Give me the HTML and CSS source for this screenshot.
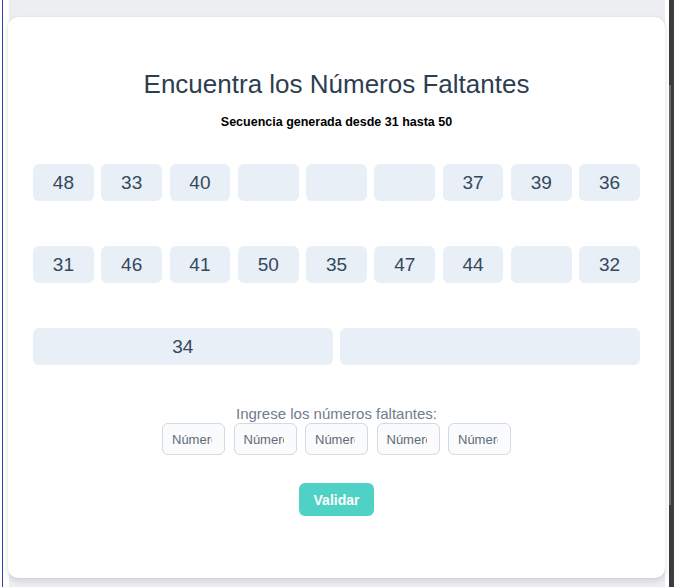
FILE: index.html
```html
<!DOCTYPE html>
<html lang="es">
<head>
<meta charset="utf-8">
<title>Encuentra los Números Faltantes</title>
<link rel="stylesheet" href="styles.css">
</head>
<body>
<div class="page">
  <div class="edge"><span class="edge-line"></span></div>
  <div class="main">
    <div class="backcard"></div>
    <div class="modal">
      <h1 class="title">Encuentra los Números Faltantes</h1>
      <p class="subtitle">Secuencia generada desde 31 hasta 50</p>
      <div class="board">
        <div class="grid">
          <div class="cell">48</div>
          <div class="cell">33</div>
          <div class="cell">40</div>
          <div class="cell"></div>
          <div class="cell"></div>
          <div class="cell"></div>
          <div class="cell">37</div>
          <div class="cell">39</div>
          <div class="cell">36</div>
          <div class="cell">31</div>
          <div class="cell">46</div>
          <div class="cell">41</div>
          <div class="cell">50</div>
          <div class="cell">35</div>
          <div class="cell">47</div>
          <div class="cell">44</div>
          <div class="cell"></div>
          <div class="cell">32</div>
        </div>
        <div class="last-row">
          <div class="cell">34</div>
          <div class="cell"></div>
        </div>
      </div>
      <p class="label">Ingrese los números faltantes:</p>
      <div class="inputs">
        <input class="num" type="text" placeholder="Número">
        <input class="num" type="text" placeholder="Número">
        <input class="num" type="text" placeholder="Número">
        <input class="num" type="text" placeholder="Número">
        <input class="num" type="text" placeholder="Número">
      </div>
      <button class="validate" type="button">Validar</button>
    </div>
  </div>
  <div class="scrollbar"><span class="thumb"></span></div>
</div>
</body>
</html>
```
FILE: styles.css
```css
html, body {
  margin: 0;
  padding: 0;
  width: 674px;
  height: 587px;
  overflow: hidden;
  background: #ffffff;
  font-family: "Liberation Sans", Arial, sans-serif;
}

.page {
  display: flex;
  height: 587px;
}

.edge {
  width: 3px;
  display: flex;
  justify-content: flex-end;
  background: #ffffff;
}

.edge-line {
  width: 1px;
  background: #3340a8;
}

.main {
  flex: 1;
  position: relative;
  background: #ffffff;
}

.backcard {
  position: absolute;
  left: 6px;
  right: 4px;
  top: -10px;
  bottom: -20px;
  background: #eceef1;
  border-radius: 8px;
}

.modal {
  position: absolute;
  left: 5px;
  top: 17px;
  width: 657px;
  height: 561px;
  box-sizing: border-box;
  padding: 52px 25px 0;
  background: #ffffff;
  border-radius: 10px;
  box-shadow: 0 3px 6px rgba(0, 0, 0, 0.12), 0 0 2px rgba(0, 0, 0, 0.06);
  display: flex;
  flex-direction: column;
  align-items: center;
}

.title {
  margin: 0;
  font-size: 26px;
  line-height: 30px;
  font-weight: normal;
  color: #2d3e50;
}

.subtitle {
  margin: 16px 0 0;
  font-size: 12.5px;
  line-height: 14px;
  font-weight: bold;
  color: #000000;
}

.board {
  margin-top: 35px;
  width: 607px;
  display: flex;
  flex-direction: column;
  row-gap: 45px;
}

.grid {
  display: grid;
  grid-template-columns: repeat(9, 1fr);
  column-gap: 7.5px;
  row-gap: 45px;
}

.last-row {
  display: grid;
  grid-template-columns: 1fr 1fr;
  column-gap: 7.5px;
}

.cell {
  height: 37px;
  background: #e8eff6;
  border-radius: 6px;
  display: flex;
  align-items: center;
  justify-content: center;
  font-size: 19px;
  color: #34495e;
}

.label {
  margin: 40px 0 0;
  font-size: 15px;
  line-height: 17px;
  color: #6f7d8c;
}

.inputs {
  margin-top: 1px;
  display: flex;
  gap: 8.5px;
}

.num {
  width: 63px;
  height: 32px;
  box-sizing: border-box;
  padding: 0 12px 0 9px;
  border: 1px solid #d3dae2;
  border-radius: 6px;
  background: #f9fbfc;
  font-family: "Liberation Sans", Arial, sans-serif;
  font-size: 13px;
  color: #333333;
}

.num::placeholder {
  color: #5f6b77;
}

.validate {
  margin-top: 28px;
  width: 75px;
  height: 33px;
  border: none;
  border-radius: 6px;
  background: #4fd1c5;
  color: #ffffff;
  font-family: "Liberation Sans", Arial, sans-serif;
  font-size: 14px;
  font-weight: bold;
}

.scrollbar {
  width: 5px;
  background: #3c3c3c;
  display: flex;
  flex-direction: column;
  padding-top: 85px;
  box-sizing: border-box;
}

.thumb {
  height: 420px;
  width: 2px;
  background: #6a6a6a;
}
```
